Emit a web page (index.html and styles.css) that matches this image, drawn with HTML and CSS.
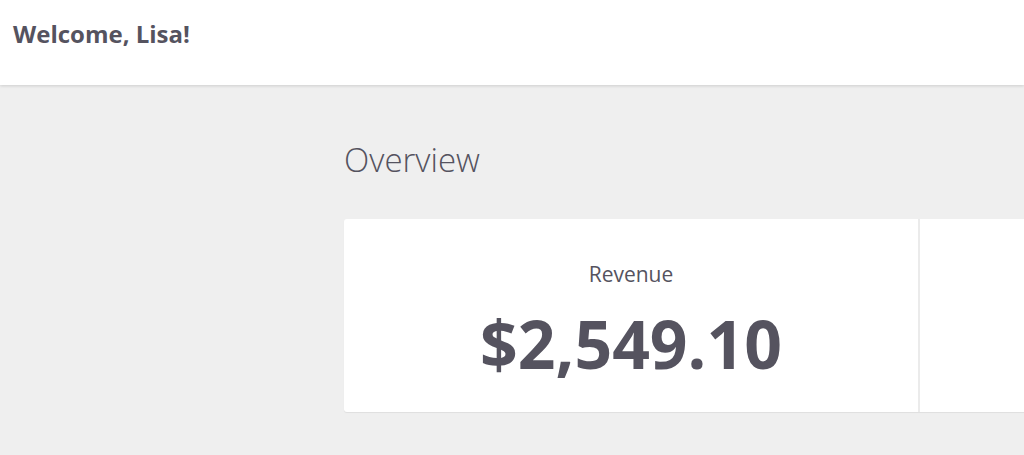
FILE: index.html
```html
<!DOCTYPE html>
<html lang="en">
<head>
<meta charset="utf-8">
<title>Dashboard</title>
<link rel="stylesheet" href="styles.css">
</head>
<body>
  <header class="topbar">
    <h1 class="welcome">Welcome, Lisa!</h1>
  </header>
  <div class="layout">
    <aside class="sidebar"></aside>
    <main class="content">
      <h2 class="section-title">Overview</h2>
      <div class="stats-card">
        <div class="stat">
          <div class="stat-label">Revenue</div>
          <div class="stat-value">$2,549.10</div>
        </div>
        <div class="stat stat-empty"></div>
      </div>
    </main>
  </div>
</body>
</html>
```

FILE: styles.css
```css
* { box-sizing: border-box; }
html, body {
  margin: 0;
  padding: 0;
  height: 100%;
  overflow: hidden;
}
body {
  background: #efefef;
  font-family: "Open Sans", "Liberation Sans", sans-serif;
  color: #55535f;
}
.topbar {
  height: 85px;
  background: #ffffff;
  box-shadow: 0 1px 3px rgba(0, 0, 0, 0.14);
  padding: 18px 0 0 13px;
  position: relative;
  z-index: 1;
}
.welcome {
  margin: 0;
  font-size: 24px;
  line-height: 1.362;
  font-weight: 700;
  color: #55535f;
}
.layout {
  display: flex;
}
.sidebar {
  flex: 0 0 344px;
}
.content {
  flex: 0 0 auto;
  padding-top: 53px;
}
.section-title {
  margin: 0 0 36px;
  font-size: 33px;
  font-weight: 300;
  color: #55535f;
  line-height: 1.362;
}
.stats-card {
  display: flex;
  background: #ffffff;
  border-radius: 3px;
  box-shadow: 0 1px 1px rgba(0, 0, 0, 0.07);
  width: 1150px;
}
.stat {
  flex: 0 0 574px;
  text-align: center;
  padding: 41px 0 24px;
}
.stat + .stat {
  border-left: 2px solid #ebebeb;
}
.stat-label {
  font-size: 21px;
  line-height: 1.362;
  color: #55535f;
  margin-bottom: 10px;
}
.stat-value {
  font-size: 66px;
  font-weight: 700;
  line-height: 1.362;
  color: #55535f;
}
```
